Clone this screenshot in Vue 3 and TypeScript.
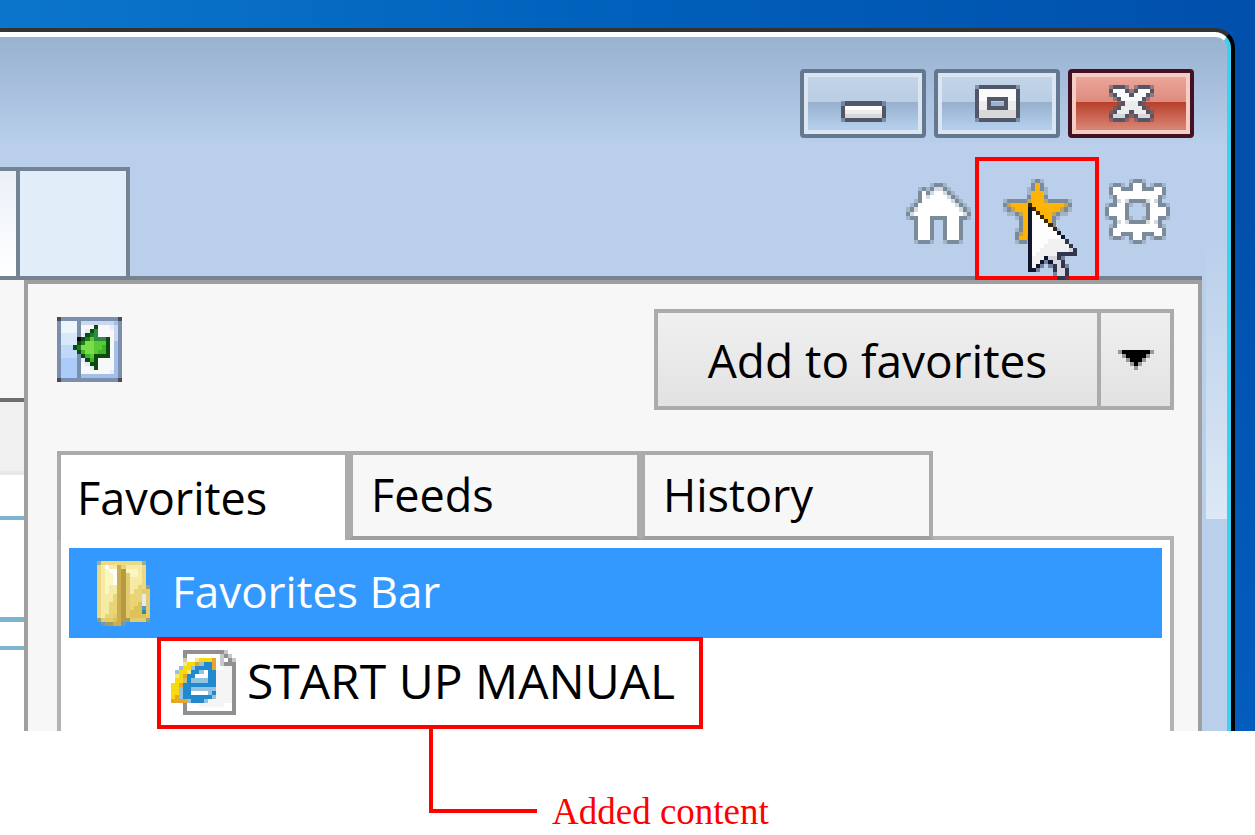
<script setup lang="ts">
import { h, ref } from 'vue'
import type { FunctionalComponent } from 'vue'

type Palette = Record<string, string>
interface Art {
  rows: string[]
  palette: Palette
}

/* Icons are described as rows of characters, one character per cell. */
const PixelIcon: FunctionalComponent<{ art: Art }> = ({ art }) => {
  const cols = Math.max(...art.rows.map((r) => r.length))
  const rects = art.rows.flatMap((row, y) => {
    const out = []
    for (let x = 0; x < row.length; ) {
      const c = row[x]
      let end = x + 1
      while (end < row.length && row[end] === c) end++
      if (art.palette[c]) {
        out.push(h('rect', { x, y, width: end - x, height: 1, fill: art.palette[c] }))
      }
      x = end
    }
    return out
  })
  return h(
    'svg',
    {
      viewBox: `0 0 ${cols} ${art.rows.length}`,
      width: Math.round((cols * 65) / 16),
      height: Math.round((art.rows.length * 65) / 16),
      'shape-rendering': 'crispEdges',
      'aria-hidden': 'true',
    },
    rects,
  )
}
PixelIcon.props = ['art']

const captionPalette: Palette = { g: '#525669', l: '#52566980', w: '#fbfbfb', v: '#ececec', s: '#d8d8d8' }
const toolPalette: Palette = { g: '#7c8b99', l: '#7c8b9966', w: '#ffffff', s: '#d3dae1', y: '#fdb409', d: '#c9a04c' }

const minimizeArt: Art = {
  palette: captionPalette,
  rows: ['', '', '', '', 'lgggggggggl', 'gwwwwwwwwwg', 'gvvvvvvvvvg', 'gsssssssssg', 'lgggggggggl'],
}
const maximizeArt: Art = {
  palette: captionPalette,
  rows: [
    'lgggggggggl',
    'gwwwwwwwwwg',
    'gwwwwwwwwwg',
    'gwwgggggwwg',
    'gvvg...gvvg',
    'gvvgggggvvg',
    'gsssssssssg',
    'gsssssssssg',
    'lgggggggggl',
  ],
}
const closeArt: Art = {
  palette: captionPalette,
  rows: [
    'lgggl.lgggl',
    'gwwwglgwwwg',
    'lgwwwgwwwgl',
    '.lgwwwwwgl.',
    '..lgvvvgl..',
    '.lgvvvvvgl.',
    'lgvvvgvvvgl',
    'gsssglgsssg',
    'lgggl.lgggl',
  ],
}
const homeArt: Art = {
  palette: toolPalette,
  rows: [
    '................',
    '......lggl......',
    '...lglgssgl.....',
    '...gwgswwsgl....',
    '...gwswwwwsgl...',
    '..lgwwwwwwwsgl..',
    '.lgwwwwwwwwwsgl.',
    'lgswwwwwwwwwwsgl',
    'gswwwwwwwwwwwwsg',
    'lggwwwggggwwwggl',
    '..gwwwg..gwwwg..',
    '..gwwwg..gwwwg..',
    '..gwwwg..gwwwg..',
    '..gwwwg..gwwwg..',
    '..gwwwg..gwwwg..',
    '..lgggl..lgggl..',
  ],
}
const starArt: Art = {
  palette: toolPalette,
  rows: [
    '.......lgl.......',
    '.......gyg.......',
    '......lgygl......',
    '......lyyyl......',
    '......gyyyg......',
    'lgggggdyyydgggggl',
    'gdyyyyyyyyyyyyydg',
    'lgdyyyyyyyyyyydgl',
    '.llgdyyyyyyydgll.',
    '...lgyyyyyyygl...',
    '....gyyyyyyyg....',
    '....gyyyyyyyg....',
    '...lgyyyyyyygl...',
    '...gdyyydyyydg...',
    '...gyydgldyyyg...',
    '...lggl...lggl...',
  ],
}
const gearArt: Art = {
  palette: toolPalette,
  rows: [
    '......lggl......',
    '.lggl.gwwg.lggl.',
    '.gwwgggwwgggwwg.',
    '.gwwwwwwwwwwwwg.',
    '.lgwwwwwwwwwwgl.',
    '..gswsggggswsg..',
    'lggwwgl..lgwwggl',
    'gwwwwg....gwwwwg',
    'gwwwwg....gwwwwg',
    'lggwwgl..lgwwggl',
    '..gswsggggswsg..',
    '.lgwwwwwwwwwwgl.',
    '.gwwwwwwwwwwwwg.',
    '.gwwgggwwgggwwg.',
    '.lggl.gwwg.lggl.',
    '......lggl......',
  ],
}
const cursorArt: Art = {
  palette: { K: '#10142c', B: '#35280c', N: '#2f3650', w: '#fdfdfd', v: '#f0f0f1', s: '#d6d7dc', l: '#2f365080' },
  rows: [
    'B...........',
    'KB..........',
    'KwB.........',
    'KwwB........',
    'KwwwB.......',
    'KwwwwB......',
    'KwwwwwB.....',
    'KwwwwwwK....',
    'KwwwwwwwK...',
    'KwwwwvvvvN..',
    'KwwwvvvvvvN.',
    'KwwvvvvvvvsN',
    'KwvvvvvNNNNN',
    'KvvvKssNl...',
    'KvvKlKssN...',
    'KvKl.lNsNl..',
    'KKl...NssN..',
    '......lssN..',
    '.......NNl..',
  ],
}
const paneArt: Art = {
  palette: {
    k: '#4b4c52', b: '#7a8eae', a: '#ecf4fc', c: '#d9e7fa', e: '#c0d8f9', f: '#abcbf8',
    w: '#f8f8f8', p: '#e5ebfa', q: '#c9d8ec', r: '#a3bfe8', K: '#050805', D: '#0d4a10',
    G: '#1a7f1a', M: '#2e8b45', L: '#7bdc4b', H: '#57ca35', J: '#3cb526',
  },
  rows: [
    'kbbbbbbbbbbbbbbk',
    'baaaabqqqqqqqqrb',
    'baaaabwwwDwwwpqb',
    'baaaabwpDMwwwwqb',
    'bccccbpDGMwwwwqb',
    'bccccKDGHMMMDwqb',
    'bccccDGLLHHHDwrb',
    'beeeDGLLLHHJDwrb',
    'beeeeDJLLHJJDwrb',
    'beeeebDJHDDDDwrb',
    'bffffbpDJDwwwwrb',
    'bffffbwpDDwwwwrb',
    'bffffbwwpDwwwwrb',
    'bffffbwwwwwwwprb',
    'bffffbrrrrrrrrrb',
    'kbbbbbbbbbbbbbbk',
  ],
}
const caretArt: Art = {
  palette: { K: '#000000', l: '#999999' },
  rows: ['lKKKKKKKl', '.lKKKKKl.', '..lKKKl..', '...lKl...', '....l....'],
}
const folderArt: Art = {
  palette: {
    t: '#9bb08c', a: '#edd983', b: '#f5eba4', c: '#fbf7c0', w: '#ffffff', d: '#e4cb70', e: '#c9ad4e',
    f: '#b59a40', g: '#dfc255', h: '#e9d478', x: '#a29d63', i: '#e9e9e6', j: '#3da2d3', k: '#3189a5', n: '#6e9bab',
  },
  rows: [
    'taaaaaaaaaat.',
    'abwbbehbbbba.',
    'abcwwefcccba.',
    'abccwefdccba.',
    'abccwefdbbba.',
    'abccwefdbbba.',
    'abcbbefdbbhax',
    'abcbbefdbhhdd',
    'abbbhefdhhhid',
    'abbbhefdhhhid',
    'abbhhefdhhgid',
    'abbhhefdhggjd',
    'abbhhefdgggkd',
    'abhhdefdggggd',
    'xdddgefxddddx',
    '.nxxeen......',
  ],
}
const linkArt: Art = {
  palette: {
    g: '#909090', l: '#c8c8c8', w: '#ffffff', t: '#f5f5f5', y: '#f7da0c', p: '#f7e580', o: '#e8a52c',
    b: '#2389cf', c: '#94c3df', m: '#c2c177',
  },
  rows: [
    '...ggggggggggl..',
    '...gwwwwwwwwlgl.',
    '...lwwpyyyowlwgl',
    '...pyyocbbowlggg',
    '..cyycbbbbowwttg',
    '.cyypbbcwbbttttg',
    '.pyobbwwwbbttttg',
    '.yymbccccbbttttg',
    'yyobbbbbbbbttttg',
    'yycbbccccccttttg',
    'yycbbwwwwcbttttg',
    'yocbbbbbbbcttttg',
    'oooocbbbcttttttg',
    '...gwwwttttttwwg',
    '...gwwwwwwwwwwwg',
    '...ggggggggggggg',
  ],
}

const tabs = ['Favorites', 'Feeds', 'History']
const activeTab = ref('Favorites')
</script>

<template>
  <main class="scene">
    <div class="desktop">
      <section class="window">
        <div class="frame">
          <header class="titlebar">
            <button class="caption" type="button" aria-label="Minimize"><PixelIcon :art="minimizeArt" /></button>
            <button class="caption" type="button" aria-label="Maximize"><PixelIcon :art="maximizeArt" /></button>
            <button class="caption close" type="button" aria-label="Close"><PixelIcon :art="closeArt" /></button>
          </header>

          <div class="toolbar">
            <div class="page-tabs">
              <div class="page-tab current"></div>
              <button class="page-tab fresh" type="button" aria-label="New tab"></button>
            </div>
            <nav class="tools">
              <button class="tool" type="button" aria-label="Home"><PixelIcon :art="homeArt" /></button>
              <button class="tool marked" type="button" aria-label="View favorites">
                <PixelIcon :art="starArt" />
                <PixelIcon class="cursor" :art="cursorArt" />
              </button>
              <button class="tool" type="button" aria-label="Tools"><PixelIcon :art="gearArt" /></button>
            </nav>
          </div>

          <div class="body">
            <div class="page">
              <div class="page-top"></div>
              <div class="page-band"></div>
              <div class="page-gap"></div>
              <div class="page-field"></div>
              <div class="page-slot"></div>
            </div>

            <aside class="panel">
              <div class="panel-head">
                <button class="pin" type="button" aria-label="Pin the Favorites Center"><PixelIcon :art="paneArt" /></button>
                <div class="split">
                  <button class="add" type="button">Add to favorites</button>
                  <button class="more" type="button" aria-label="More options"><PixelIcon :art="caretArt" /></button>
                </div>
              </div>

              <div class="tabs" role="tablist">
                <button
                  v-for="tab in tabs"
                  :key="tab"
                  class="tab"
                  :class="{ active: tab === activeTab }"
                  type="button"
                  role="tab"
                  :aria-selected="tab === activeTab"
                  @click="activeTab = tab"
                >
                  {{ tab }}
                </button>
              </div>

              <div class="list">
                <div class="row selected">
                  <PixelIcon :art="folderArt" />
                  <span class="label">Favorites Bar</span>
                </div>
                <div class="row child">
                  <PixelIcon :art="linkArt" />
                  <a class="label" href="#">START UP MANUAL</a>
                  <div class="callout">
                    <span class="leader"></span>
                    <span class="note">Added content</span>
                  </div>
                </div>
              </div>
            </aside>
          </div>
        </div>
      </section>
    </div>
  </main>
</template>

<style>
body {
  margin: 0;
  background: #fff;
}
</style>

<style scoped>
.scene {
  min-height: 100vh;
  background: #fff;
  font-family: "Open Sans", "Noto Sans", sans-serif;
  font-size: 46px;
  color: #000;
}
.scene *,
.scene *::before {
  box-sizing: border-box;
}
button {
  margin: 0;
  padding: 0;
  border: 0;
  background: none;
  font: inherit;
  color: inherit;
}
svg {
  display: block;
  flex: none;
}
.desktop {
  padding: 28px 20px 0 0;
  background:
    linear-gradient(to bottom, transparent 30%, #066ad080 100%),
    linear-gradient(to right, #0c76cc 0%, #0060bb 50%, #0050ac 100%);
}
.window {
  border-top: 4px solid #333;
  border-right: 4px solid #000;
  border-top-right-radius: 20px;
  background: #000;
}
.frame {
  position: relative;
  border-top: 5px solid #fff;
  border-right: 4px solid #3fcff2;
  border-top-right-radius: 16px;
  background: linear-gradient(to bottom, #98b2d0 0, #b9cfeb 108px, #b9cfea 100%) #b9cfea;
}
.frame::before {
  content: "";
  position: absolute;
  right: 0;
  top: 200px;
  width: 21px;
  height: 282px;
  background: linear-gradient(to bottom, #dce8f500, #dce8f5);
}

.titlebar {
  display: flex;
  justify-content: flex-end;
  gap: 8px;
  padding: 32px 33px 0 0;
}
.caption {
  display: flex;
  align-items: center;
  justify-content: center;
  width: 126px;
  height: 69px;
  border: 4px solid #64788f;
  border-radius: 4px;
  box-shadow: inset 0 0 0 4px #dbe6f2;
  background: linear-gradient(to bottom, #c4d5e8 0, #b9cee3 48%, #96b0ce 48%, #b4cfeb 90%);
}
.caption.close {
  border-color: #451122;
  box-shadow: inset 0 0 0 4px #f4cdc6;
  background: linear-gradient(to bottom, #eeaa9e 0, #dc8b7e 48%, #b8402a 48%, #d88272 90%);
}

.toolbar {
  display: flex;
  justify-content: space-between;
  margin-right: 25px;
  padding-top: 19px;
  border-bottom: 4px solid #748394;
}
.page-tabs {
  display: flex;
  align-items: stretch;
  margin-top: 10px;
  border: solid #748394;
  border-width: 4px 4px 0 0;
}
.page-tab.current {
  width: 16px;
  background: linear-gradient(to bottom, #ebf0f8, #fff);
}
.page-tab.fresh {
  width: 110px;
  border-left: 4px solid #748394;
  background: #e1eefa;
}
.tools {
  display: flex;
  align-items: flex-start;
  padding-right: 32px;
}
.tool {
  margin-top: 22px;
}
.tool.marked {
  position: relative;
  z-index: 1;
  width: 124px;
  height: 123px;
  margin: 0 6px -4px 4px;
  padding: 18px 0 0 24px;
  border: 4px solid #f00;
  display: flex;
  align-items: flex-start;
}
.cursor {
  position: absolute;
  left: 49px;
  top: 42px;
}

.body {
  display: flex;
  margin-right: 25px;
}
.page {
  display: flex;
  flex-direction: column;
  width: 24px;
  background: #fff;
}
.page-top {
  height: 122px;
  border-bottom: 4px solid #6e6e6e;
  background: #f7f7f7;
}
.page-band {
  height: 73px;
  border-bottom: 4px solid #e8e8e8;
  background: #f0f0f0;
}
.page-gap {
  height: 45px;
  border-bottom: 4px solid #7eb4cf;
}
.page-field {
  height: 102px;
  border-bottom: 5px solid #7eb4cf;
}
.page-slot {
  height: 28px;
  border-bottom: 4px solid #7eb4cf;
}

.panel {
  flex: 1;
  min-width: 0;
  padding: 25px 24px 0 29px;
  border: solid #9f9f9f;
  border-width: 4px 4px 0;
  background: #f7f7f7;
}
.panel-head {
  display: flex;
  justify-content: space-between;
  align-items: flex-start;
}
.pin {
  margin-top: 8px;
}
.split {
  display: flex;
  height: 101px;
  border: 4px solid #ababab;
  background: linear-gradient(to bottom, #f0f0f0, #e2e2e2);
}
.add {
  width: 439px;
  text-align: center;
}
.more {
  display: flex;
  align-items: center;
  justify-content: center;
  width: 73px;
  border-left: 4px solid #ababab;
}
.tabs {
  position: relative;
  display: flex;
  margin-top: 41px;
}
.tab {
  width: 292px;
  height: 89px;
  padding: 0 0 2px 16px;
  border: 4px solid #ababab;
  border-bottom-color: #9f9f9f;
  background: #f7f7f7;
  font-size: 45px;
  text-align: left;
}
.tab + .tab {
  padding-left: 18px;
}
.tab.active {
  padding-bottom: 0;
  border-bottom: 0;
  background: #fff;
}
.list {
  margin-top: -4px;
  padding: 8px 8px 2px;
  border: solid #b3b3b3;
  border-width: 4px 4px 0;
  background: #fff;
}
.row {
  display: flex;
  align-items: center;
  height: 90px;
}
.row .label {
  padding-bottom: 4px;
  white-space: nowrap;
}
.row.selected {
  gap: 22px;
  padding-left: 28px;
  background: #3399ff;
  font-size: 44px;
  color: #fff;
}
.row.child {
  position: relative;
  gap: 11px;
  width: 546px;
  height: 92px;
  margin: -1px 0 0 88px;
  padding: 0 0 2px 10px;
  border: 4px solid #f00;
  font-size: 48px;
}
.row.child a {
  color: inherit;
  text-decoration: none;
}
.callout {
  position: absolute;
  left: 268px;
  top: 100%;
  display: flex;
  align-items: flex-end;
  gap: 15px;
}
.leader {
  width: 108px;
  height: 88px;
  border: solid #f00;
  border-width: 0 0 4px 4px;
}
.note {
  margin-bottom: -19px;
  font-family: "Liberation Serif", "Times New Roman", serif;
  font-size: 37px;
  line-height: 40px;
  color: #f00;
  white-space: nowrap;
}
</style>
